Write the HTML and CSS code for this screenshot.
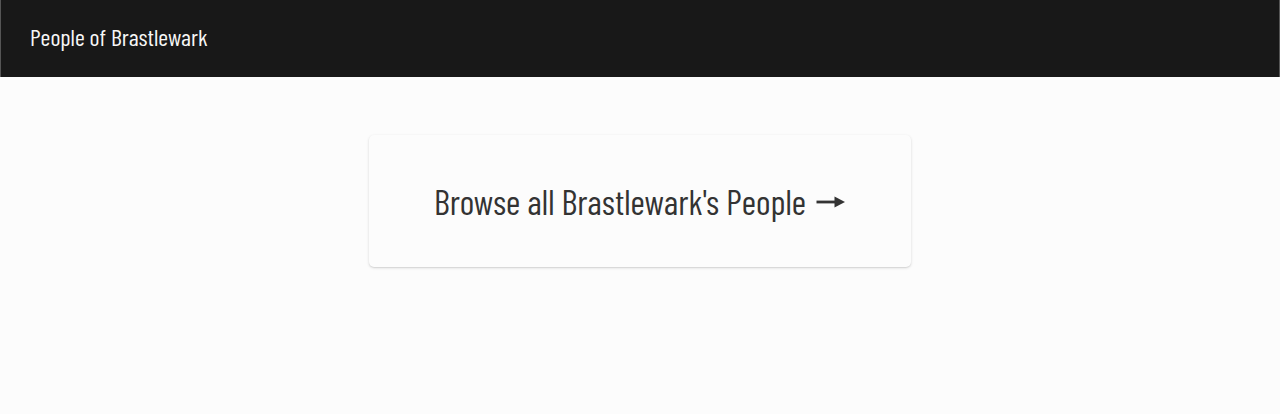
FILE: index.html
```html
<!DOCTYPE html>
<html lang="en">
<head>
<meta charset="utf-8">
<title>People of Brastlewark</title>
<link rel="stylesheet" href="styles.css">
</head>
<body>
<header class="topbar">
  <span class="brand">People of Brastlewark</span>
</header>
<main class="content">
  <a class="card" href="#">
    <span class="card-label">Browse all Brastlewark's People</span>
    <svg class="arrow" width="30" height="16" viewBox="0 0 30 16" aria-hidden="true">
      <rect x="0.5" y="6.6" width="19" height="2.8" fill="#333"/>
      <polygon points="18.5,2.5 29,8 18.5,13.5" fill="#333"/>
    </svg>
  </a>
</main>
</body>
</html>
```
FILE: styles.css
```css
* { box-sizing: border-box; }
html, body { margin: 0; padding: 0; }
body {
  background: #fcfcfc;
  font-family: "Barlow Condensed", "Open Sans", sans-serif;
  min-height: 414px;
}
.topbar {
  height: 77px;
  background: #181818;
  border-left: 1px solid #555;
  border-right: 1px solid #555;
  display: flex;
  align-items: center;
  padding-left: 29px;
}
.brand {
  color: #f6f6f6;
  font-size: 24px;
  font-weight: 400;
  line-height: 1;
  padding-bottom: 3px;
}
.content {
  display: flex;
  justify-content: center;
  padding-top: 58px;
}
.card {
  width: 542px;
  height: 132px;
  background: #fcfcfc;
  border-radius: 5px;
  box-shadow: 0 1px 3px rgba(0,0,0,0.14), 0 1px 1px rgba(0,0,0,0.06);
  display: flex;
  align-items: center;
  justify-content: center;
  gap: 10px;
  text-decoration: none;
  color: #333;
}
.card-label {
  font-size: 35px;
  line-height: 1;
}
.arrow { display: block; margin-top: 1px; }
```
